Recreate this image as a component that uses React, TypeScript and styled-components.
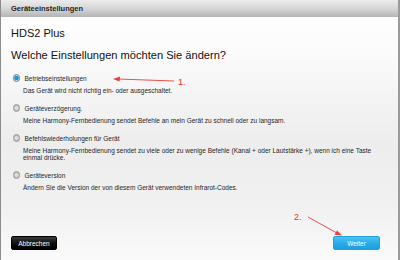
import React from "react";
import styled, { createGlobalStyle } from "styled-components";

const Global = createGlobalStyle`
  html, body { margin: 0; padding: 0; }
  body { width: 400px; height: 260px; overflow: hidden; font-family: "Liberation Sans", Arial, sans-serif; }
`;

const Window = styled.div`
  position: relative;
  width: 400px;
  height: 260px;
  box-sizing: border-box;
  border-left: 1px solid #8c8c8c;
  border-right: 2px solid #9a9a9a;
  display: flex;
  flex-direction: column;
  background: linear-gradient(180deg, #ffffff 0%, #fbfbfb 20%, #ededed 55%, #f1f1f1 80%, #fafafa 100%);
  color: #1a1a1a;
`;

const TitleBar = styled.div`
  height: 17px;
  flex: 0 0 17px;
  box-sizing: border-box;
  padding-left: 10px;
  display: flex;
  align-items: center;
  background: linear-gradient(180deg, #ececec 0%, #d6d6d6 50%, #b4b4b4 100%);
  font-weight: bold;
  font-size: 7.5px;
  color: #1e1e1e;
`;

const Body = styled.div`
  flex: 1;
  display: flex;
  flex-direction: column;
  padding: 0 15px 10px 10px;
`;

const Device = styled.div`
  margin-top: 10px;
  font-size: 11px;
  line-height: 13px;
  color: #111;
`;

const Question = styled.div`
  margin-top: 8.5px;
  font-size: 11.1px;
  line-height: 13px;
  color: #111;
`;

const Options = styled.div`
  margin-top: 12.5px;
  display: flex;
  flex-direction: column;
  gap: 10.5px;
`;

const Option = styled.div`
  display: flex;
  flex-direction: column;
`;

const OptionHead = styled.div`
  display: flex;
  align-items: center;
  height: 8px;
  gap: 4.5px;
  padding-left: 1.5px;
  font-size: 6.5px;
  color: #1e1e1e;
`;

const Radio = styled.span<{ $checked?: boolean }>`
  width: 7.5px;
  height: 7.5px;
  box-sizing: border-box;
  border-radius: 50%;
  border: 1px solid ${(p) => (p.$checked ? "#6f7c88" : "#999")};
  background: ${(p) =>
    p.$checked
      ? "radial-gradient(circle, #1898dc 0 1.9px, #bfe0f2 2.5px, #e2e2e2 100%)"
      : "radial-gradient(circle, #dcdcdc 0 1.6px, #b4b4b4 2.5px, #cfcfcf 100%)"};
`;

const Desc = styled.div`
  margin-top: 4.5px;
  padding-left: 12px;
  font-size: 6.5px;
  line-height: 7px;
  color: #1e1e1e;
`;

const Footer = styled.div`
  margin-top: auto;
  display: flex;
  justify-content: space-between;
  align-items: center;
`;

const Button = styled.button<{ $variant: "dark" | "blue" }>`
  height: 14px;
  box-sizing: border-box;
  border-radius: 2px;
  font-family: "Liberation Sans", Arial, sans-serif;
  font-size: 6.5px;
  color: #fff;
  padding: 0;
  cursor: pointer;
  ${(p) =>
    p.$variant === "dark"
      ? `width: 46px; border: 1px solid #000; background: linear-gradient(180deg, #3a3a3a 0%, #0a0a0a 60%, #000 100%);`
      : `width: 47px; margin-right: 3px; border: 1px solid #23a2da; background: linear-gradient(180deg, #4cc4f3 0%, #28acea 50%, #1e9ee0 100%);`}
`;

const Annotations = styled.svg`
  position: absolute;
  left: 0;
  top: 0;
  pointer-events: none;
`;

const Mark = styled.text`
  font-family: "Liberation Sans", Arial, sans-serif;
  font-size: 9px;
  fill: #ee2a2a;
`;

const options = [
  {
    label: "Betriebseinstellungen",
    desc: "Das Gerät wird nicht richtig ein- oder ausgeschaltet.",
    checked: true,
  },
  {
    label: "Geräteverzögerung.",
    desc: "Meine Harmony-Fernbedienung sendet Befehle an mein Gerät zu schnell oder zu langsam.",
  },
  {
    label: "Befehlswiederholungen für Gerät",
    desc: "Meine Harmony-Fernbedienung sendet zu viele oder zu wenige Befehle (Kanal + oder Lautstärke +), wenn ich eine Taste einmal drücke.",
  },
  {
    label: "Geräteversion",
    desc: "Ändern Sie die Version der von diesem Gerät verwendeten Infrarot-Codes.",
  },
];

export default function App() {
  return (
    <>
      <Global />
      <Window>
        <TitleBar>Geräteeinstellungen</TitleBar>
        <Body>
          <Device>HDS2 Plus</Device>
          <Question>Welche Einstellungen möchten Sie ändern?</Question>
          <Options>
            {options.map((o) => (
              <Option key={o.label}>
                <OptionHead>
                  <Radio $checked={o.checked} />
                  <span>{o.label}</span>
                </OptionHead>
                <Desc>{o.desc}</Desc>
              </Option>
            ))}
          </Options>
          <Footer>
            <Button $variant="dark">Abbrechen</Button>
            <Button $variant="blue">Weiter</Button>
          </Footer>
        </Body>
        <Annotations width="400" height="260" viewBox="0 0 400 260">
          <line x1="173" y1="81" x2="117" y2="79" stroke="#ee3a3a" strokeWidth="0.9" />
          <polygon points="112,79 119,76.6 118.6,81.4" fill="#ee3a3a" />
          <Mark x="177" y="84.5">1.</Mark>
          <line x1="307" y1="217" x2="336" y2="233" stroke="#ee3a3a" strokeWidth="0.9" />
          <polygon points="341,235.5 333.5,234.8 336,230.5" fill="#ee3a3a" />
          <Mark x="293" y="219.5">2.</Mark>
        </Annotations>
      </Window>
    </>
  );
}
